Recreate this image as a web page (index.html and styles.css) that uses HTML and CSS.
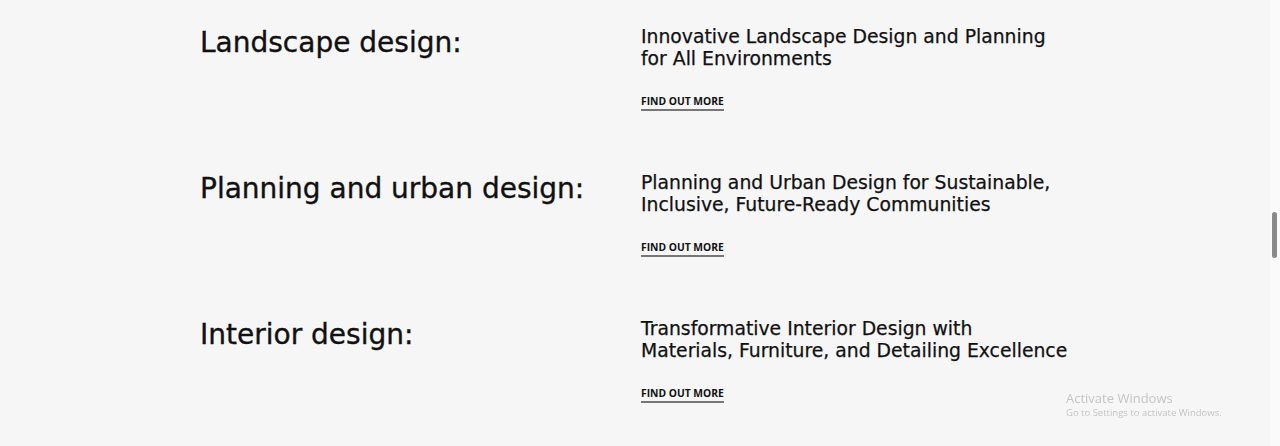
FILE: index.html
```html
<!DOCTYPE html>
<html lang="en">
<head>
<meta charset="utf-8">
<title>Services</title>
<link rel="stylesheet" href="styles.css">
</head>
<body>
<main class="services">
  <section class="service">
    <h2 class="service-title">Landscape design:</h2>
    <div class="service-body">
      <p class="service-text">Innovative Landscape Design and Planning<br>for All Environments</p>
      <a class="service-link" href="#">FIND OUT MORE</a>
    </div>
  </section>
  <section class="service">
    <h2 class="service-title">Planning and urban design:</h2>
    <div class="service-body">
      <p class="service-text">Planning and Urban Design for Sustainable,<br>Inclusive, Future-Ready Communities</p>
      <a class="service-link" href="#">FIND OUT MORE</a>
    </div>
  </section>
  <section class="service">
    <h2 class="service-title">Interior design:</h2>
    <div class="service-body">
      <p class="service-text">Transformative Interior Design with<br>Materials, Furniture, and Detailing Excellence</p>
      <a class="service-link" href="#">FIND OUT MORE</a>
    </div>
  </section>
</main>
<div class="scrollbar"><div class="scrollbar-thumb"></div></div>
<div class="watermark">
  <div class="watermark-title">Activate Windows</div>
  <div class="watermark-sub">Go to Settings to activate Windows.</div>
</div>
</body>
</html>
```
FILE: styles.css
```css
html, body {
  margin: 0;
  padding: 0;
  height: 100%;
  overflow: hidden;
}
body {
  background: #f6f6f6;
  font-family: "DejaVu Sans", "Open Sans", sans-serif;
  color: #111;
}
.services {
  display: flex;
  flex-direction: column;
  padding: 24px 0 0 200px;
}
.service {
  display: grid;
  grid-template-columns: 441px 440px;
  height: 146px;
}
.service-title {
  margin: 2px 0 0;
  font-size: 28px;
  font-weight: 400;
  line-height: 34px;
  -webkit-text-stroke: 0.35px #111;
}
.service-body {
  display: flex;
  flex-direction: column;
  align-items: flex-start;
  padding-top: 2px;
}
.service-text {
  margin: 0;
  font-size: 18.8px;
  font-weight: 400;
  line-height: 22px;
  -webkit-text-stroke: 0.25px #111;
}
.service-link {
  margin-top: 24px;
  font-family: "Open Sans", "DejaVu Sans", sans-serif;
  font-size: 10.3px;
  font-weight: 700;
  line-height: 14px;
  color: #111;
  text-decoration: none;
  padding-bottom: 1px;
  border-bottom: 2px solid #777;
}
.scrollbar {
  position: fixed;
  top: 0;
  right: 0;
  width: 10px;
  height: 100%;
  background: #fafafa;
}
.scrollbar-thumb {
  position: absolute;
  top: 212px;
  left: 2px;
  width: 5px;
  height: 46px;
  border-radius: 3px;
  background: #8a8a8a;
}
.watermark {
  position: fixed;
  left: 1066px;
  top: 390px;
  color: #c4c4c4;
  font-family: "Open Sans", "Liberation Sans", sans-serif;
}
.watermark-title {
  font-size: 13px;
  line-height: 16px;
}
.watermark-sub {
  font-size: 9.5px;
  line-height: 14px;
}
```
